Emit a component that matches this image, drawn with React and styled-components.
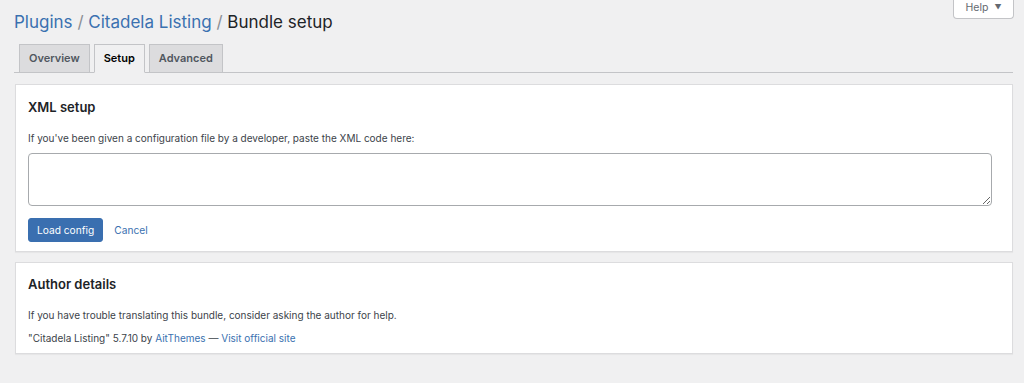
import React from 'react';
import styled, { createGlobalStyle } from 'styled-components';

const GlobalStyle = createGlobalStyle`
  html, body {
    margin: 0;
    padding: 0;
    background: #f0f0f1;
    font-family: Inter, "Liberation Sans", Arial, sans-serif;
    color: #3c434a;
  }
`;

const Page = styled.div`
  position: relative;
  padding: 0 11px 30px 14px;
`;

const HelpButton = styled.button`
  position: absolute;
  top: -1px;
  right: 10px;
  width: 61px;
  height: 20px;
  background: #fff;
  border: 1px solid #c3c4c7;
  border-top: none;
  border-radius: 0 0 4px 4px;
  font-family: inherit;
  font-size: 10.5px;
  color: #646970;
  display: flex;
  align-items: center;
  justify-content: center;
  gap: 6px;
  padding: 0 0 2px;
  span {
    font-size: 7px;
  }
`;

const Title = styled.h1`
  margin: 0;
  padding: 8px 0 0;
  font-size: 17px;
  font-weight: 400;
  line-height: 28px;
  color: #1d2327;
  a {
    color: #3a71b0;
    text-decoration: none;
  }
`;

const Sep = styled.span`
  color: #8c8f94;
`;

const TabBar = styled.nav`
  display: flex;
  gap: 4px;
  margin-top: 8px;
  padding-left: 5px;
  border-bottom: 1px solid #c3c4c7;
`;

const Tab = styled.a`
  display: block;
  margin-bottom: -1px;
  padding: 5px 9px 5px;
  font-size: 11px;
  font-weight: 600;
  line-height: 17px;
  border: 1px solid #c3c4c7;
  color: ${(p) => (p.$active ? '#000' : '#50575e')};
  background: ${(p) => (p.$active ? '#f0f0f1' : '#dcdcde')};
  border-bottom-color: ${(p) => (p.$active ? '#f0f0f1' : '#c3c4c7')};
`;

const Card = styled.section`
  margin-top: ${(p) => p.$top}px;
  margin-left: 1px;
  background: #fff;
  border: 1px solid #dcdcde;
  box-shadow: 0 1px 1px rgba(0, 0, 0, 0.04);
  padding: ${(p) => p.$pt}px 12px ${(p) => p.$pb}px;
`;

const CardTitle = styled.h2`
  margin: 0;
  font-size: 13px;
  font-weight: 600;
  line-height: 18px;
  color: #1d2327;
`;

const Text = styled.p`
  margin: ${(p) => p.$mt}px 0 0;
  font-size: 10px;
  line-height: 16px;
  color: #3c434a;
  a {
    color: #3a71b0;
    text-decoration: none;
  }
`;

const XmlBox = styled.textarea`
  display: block;
  box-sizing: border-box;
  width: calc(100% - 8px);
  height: 53px;
  margin-top: 7px;
  border: 1px solid #a7aaad;
  border-radius: 4px;
  background: #fff;
  font-family: inherit;
`;

const Actions = styled.div`
  display: flex;
  align-items: center;
  gap: 11px;
  margin-top: 12px;
`;

const PrimaryButton = styled.button`
  height: 24px;
  padding: 0 8px;
  border: 1px solid #3a6fb0;
  border-radius: 3px;
  background: #3a6fb0;
  color: #fff;
  font-family: inherit;
  font-size: 10.2px;
`;

const LinkButton = styled.a`
  font-size: 10.2px;
  color: #3a71b0;
`;

export default function App() {
  return (
    <>
      <GlobalStyle />
      <Page>
        <HelpButton>
          Help <span>▼</span>
        </HelpButton>
        <Title>
          <a>Plugins</a> <Sep>/</Sep> <a>Citadela Listing</a> <Sep>/</Sep> Bundle setup
        </Title>
        <TabBar>
          <Tab>Overview</Tab>
          <Tab $active>Setup</Tab>
          <Tab>Advanced</Tab>
        </TabBar>
        <Card $top={11} $pt={13} $pb={9}>
          <CardTitle>XML setup</CardTitle>
          <Text $mt={14}>
            If you've been given a configuration file by a developer, paste the XML code here:
          </Text>
          <XmlBox />
          <Actions>
            <PrimaryButton>Load config</PrimaryButton>
            <LinkButton>Cancel</LinkButton>
          </Actions>
        </Card>
        <Card $top={10} $pt={12} $pb={7}>
          <CardTitle>Author details</CardTitle>
          <Text $mt={14}>
            If you have trouble translating this bundle, consider asking the author for help.
          </Text>
          <Text $mt={7}>
            "Citadela Listing" 5.7.10 by <a>AitThemes</a> — <a>Visit official site</a>
          </Text>
        </Card>
      </Page>
    </>
  );
}
